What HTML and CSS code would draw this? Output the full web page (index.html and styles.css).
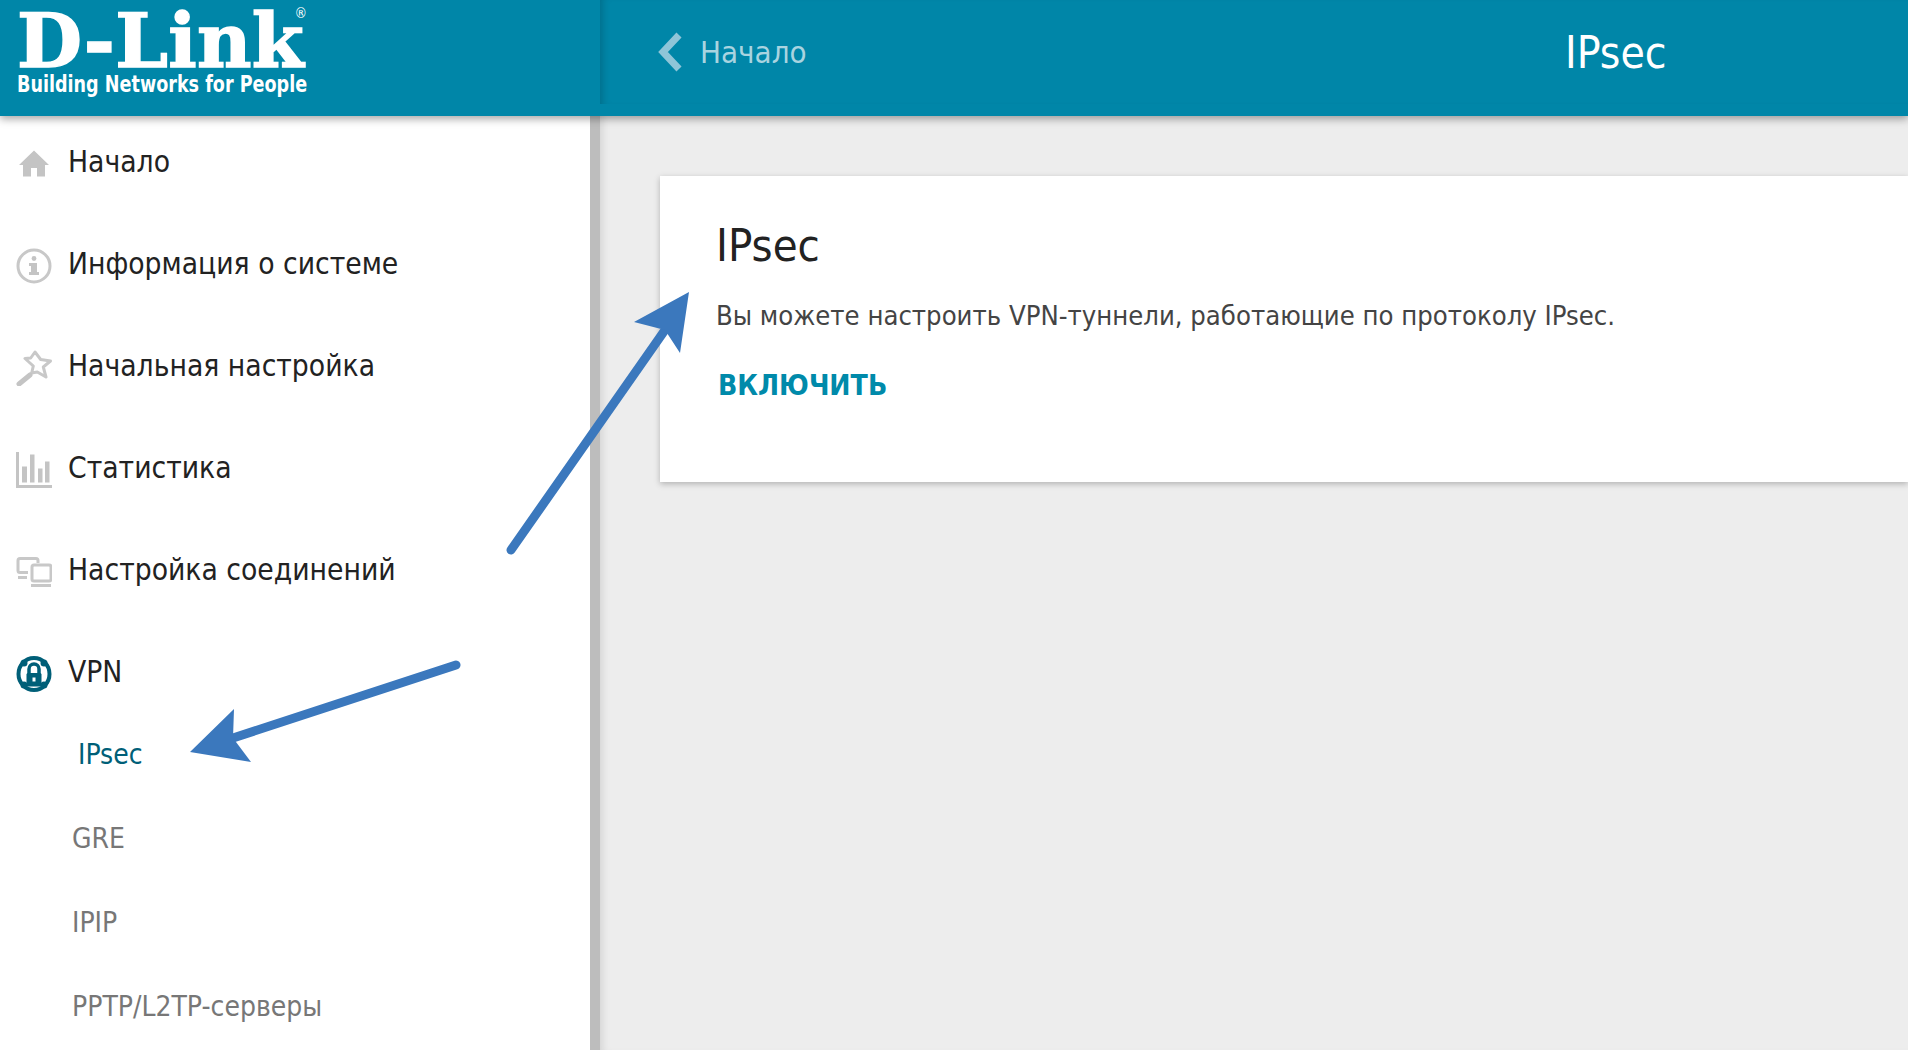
FILE: index.html
```html
<!DOCTYPE html>
<html lang="ru">

<head>
    <meta charset="UTF-8">
    <title>IPsec</title>
    <link rel="stylesheet" href="styles.css">
</head>

<body>
    <header class="header">
        <div class="logo-box">
            <div class="logo">
                <span class="logo-name">D-Link</span>
                <span class="logo-reg">®</span>
                <span class="logo-slogan">Building Networks for People</span>
            </div>
        </div>
        <div class="header-main">
            <a class="back">
                <svg class="back-icon" viewBox="0 0 24 40"><path d="M21 3 L5 20 L21 37" /></svg>
                <span>Начало</span>
            </a>
            <span class="header-title">IPsec</span>
        </div>
    </header>

    <div class="page">
        <nav class="sidebar">
            <div class="menu-item">
                <svg class="menu-icon" viewBox="0 0 36 36"><path class="fill" d="M18 4.5 L33 19 H29 V30.5 H21 V22 H15 V30.5 H7 V19 H3 Z" /></svg>
                <span>Начало</span>
            </div>
            <div class="menu-item">
                <svg class="menu-icon" viewBox="0 0 36 36">
                    <circle class="line" cx="18" cy="18" r="16" />
                    <circle class="fill" cx="18" cy="10.5" r="2.4" />
                    <path class="fill" d="M13 15 H21 V24 H23 V27 H13 V24 H15 V18 H13 Z" />
                </svg>
                <span>Информация о системе</span>
            </div>
            <div class="menu-item">
                <svg class="menu-icon" viewBox="0 0 36 36">
                    <path class="line" d="M19 2 L24.7 9.5 L34.5 11 L27.3 17 L30 27 L21.3 22 L15.7 23 L17.3 16 L9 8.5 L14.7 8 Z" />
                    <path class="wand" d="M14 25 L3 34" />
                </svg>
                <span>Начальная настройка</span>
            </div>
            <div class="menu-item">
                <svg class="menu-icon" viewBox="0 0 36 36">
                    <path class="fill" d="M0 0 H3 V33 H36 V36 H0 Z" />
                    <rect class="fill" x="6" y="14.5" width="5" height="16" />
                    <rect class="fill" x="14" y="2.5" width="4.5" height="28" />
                    <rect class="fill" x="22" y="16.5" width="4.5" height="14" />
                    <rect class="fill" x="29" y="9.5" width="4.5" height="21" />
                </svg>
                <span>Статистика</span>
            </div>
            <div class="menu-item">
                <svg class="menu-icon" viewBox="0 0 36 36">
                    <path class="line" d="M12 18.5 H4 Q2 18.5 2 16.5 V6.5 Q2 4.5 4 4.5 H20 Q22 4.5 22 6.5 V9" />
                    <path class="line" d="M2 23.5 H11" />
                    <rect class="line" x="16" y="11" width="19" height="16" rx="2" />
                    <path class="line" d="M15 31.5 H35" />
                </svg>
                <span>Настройка соединений</span>
            </div>
            <div class="menu-item menu-item-active">
                <svg class="menu-icon" viewBox="0 0 36 36">
                    <ellipse class="ring" cx="18" cy="18" rx="15.5" ry="16" />
                    <circle class="dot" cx="8" cy="7" r="3.5" />
                    <circle class="dot" cx="28" cy="7" r="3.5" />
                    <circle class="dot" cx="8" cy="29" r="3.5" />
                    <circle class="dot" cx="28" cy="29" r="3.5" />
                    <path class="shackle" d="M13 18 V13 A5 5 0 0 1 23 13 V18" />
                    <rect class="dot" x="10.5" y="17" width="15" height="13.5" rx="1.5" />
                    <rect class="hole" x="16.5" y="21.5" width="3" height="4" />
                </svg>
                <span>VPN</span>
            </div>
            <div class="submenu">
                <div class="submenu-item submenu-item-active">IPsec</div>
                <div class="submenu-item">GRE</div>
                <div class="submenu-item">IPIP</div>
                <div class="submenu-item">PPTP/L2TP-серверы</div>
            </div>
        </nav>

        <main class="content">
            <section class="card">
                <h1>IPsec</h1>
                <p>Вы можете настроить VPN-туннели, работающие по протоколу IPsec.</p>
                <a class="enable">включить</a>
            </section>
        </main>
    </div>

    <!-- стрелки поверх страницы -->
    <svg class="arrows" viewBox="0 0 1908 1050">
        <path class="arrow-line" d="M511 550 L665 330" />
        <path class="arrow-head" d="M689 292 L634 322 L665 330 L680 353 Z" />
        <path class="arrow-line" d="M456 665 L233 738" />
        <path class="arrow-head" d="M190 752 L251 762 L233 738 L234 709 Z" />
    </svg>
</body>

</html>
```

FILE: styles.css
```css
* {
    margin: 0;
    padding: 0;
    box-sizing: border-box;
}

html,
body {
    height: 100%;
    overflow: hidden;
}

body {
    position: relative;
    display: flex;
    flex-direction: column;
    font-family: "DejaVu Sans", sans-serif;
    font-stretch: condensed;
    color: #222;
    background: #ededed;
}

.header {
    position: relative;
    z-index: 2;
    display: flex;
    flex: none;
    height: 116px;
    background: #0086a8;
    box-shadow: 0 3px 8px rgba(0, 0, 0, 0.35);
}

.logo-box {
    flex: none;
    width: 600px;
    padding: 7px 0 0 17px;
}

.logo {
    position: relative;
    width: 290px;
    color: #fff;
}

.logo-name {
    display: block;
    font-family: "DejaVu Serif", serif;
    font-stretch: normal;
    font-weight: bold;
    font-size: 75px;
    line-height: 68px;
    letter-spacing: 0.3px;
    white-space: nowrap;
    -webkit-text-stroke: 1.5px #fff;
}

.logo-reg {
    position: absolute;
    top: -2px;
    right: 0;
    font-size: 14px;
}

.logo-slogan {
    display: inline-block;
    font-weight: bold;
    font-size: 23px;
    line-height: 18px;
    white-space: nowrap;
    transform: scaleX(0.85);
    transform-origin: left;
}

.header-main {
    display: flex;
    flex: 1;
    align-items: center;
    height: 104px;
    padding-left: 58px;
    color: #fff;
    box-shadow: inset 8px 0 8px -6px rgba(0, 0, 0, 0.2);
}

.back {
    display: flex;
    align-items: center;
    gap: 18px;
    width: 907px;
    font-size: 31px;
    color: #a9d4e0;
}

.back-icon {
    flex: none;
    width: 24px;
    height: 40px;
    fill: none;
    stroke: #8fc5d8;
    stroke-width: 7;
}

.header-title {
    font-size: 44px;
}

.page {
    display: flex;
    flex: 1;
    min-height: 0;
}

.sidebar {
    flex: none;
    width: 600px;
    background: #fff;
    border-right: 10px solid #bdbdbd;
}

.menu-item {
    display: flex;
    align-items: center;
    gap: 16px;
    height: 90px;
    margin-bottom: 12px;
    padding-left: 16px;
    font-size: 29.7px;
}

.menu-item-active {
    margin-bottom: 0;
}

.menu-icon {
    flex: none;
    width: 36px;
    height: 36px;
    margin-top: 5px;
}

.menu-icon .fill {
    fill: #c4c4c4;
}

.menu-icon .line {
    fill: none;
    stroke: #c8c8c8;
    stroke-width: 3;
    stroke-linejoin: round;
}

.menu-icon .wand {
    fill: none;
    stroke: #c4c4c4;
    stroke-width: 5;
    stroke-linecap: round;
}

.menu-icon .ring {
    fill: none;
    stroke: #005f78;
    stroke-width: 4;
}

.menu-icon .shackle {
    fill: none;
    stroke: #005f78;
    stroke-width: 3.5;
}

.menu-icon .dot {
    fill: #005f78;
}

.menu-icon .hole {
    fill: #fff;
}

.submenu {
    display: flex;
    flex-direction: column;
    gap: 8px;
}

.submenu-item {
    display: flex;
    flex: none;
    align-items: center;
    height: 76px;
    padding-left: 72px;
    font-size: 28px;
    color: #777;
}

.submenu-item-active {
    padding-left: 78px;
    color: #005f78;
}

.content {
    flex: 1;
    min-width: 0;
    padding: 60px 0 0 60px;
    box-shadow: inset 8px 0 8px -6px rgba(0, 0, 0, 0.12);
}

.card {
    height: 306px;
    padding: 45px 56px 0;
    background: #fff;
    box-shadow: 0 2px 6px rgba(0, 0, 0, 0.25);
}

.card h1 {
    font-weight: normal;
    font-size: 45px;
    line-height: 50px;
}

.card p {
    margin-top: 27px;
    font-size: 27.2px;
    line-height: 36px;
    color: #444;
}

.enable {
    display: block;
    margin: 34px 0 0 2px;
    font-weight: bold;
    font-size: 28.2px;
    line-height: 36px;
    text-transform: uppercase;
    color: #008aaa;
}

.arrows {
    position: absolute;
    top: 0;
    left: 0;
    z-index: 3;
    width: 1908px;
    height: 1050px;
    pointer-events: none;
}

.arrow-line {
    fill: none;
    stroke: #3b78bd;
    stroke-width: 9;
    stroke-linecap: round;
}

.arrow-head {
    fill: #3b78bd;
}
```
